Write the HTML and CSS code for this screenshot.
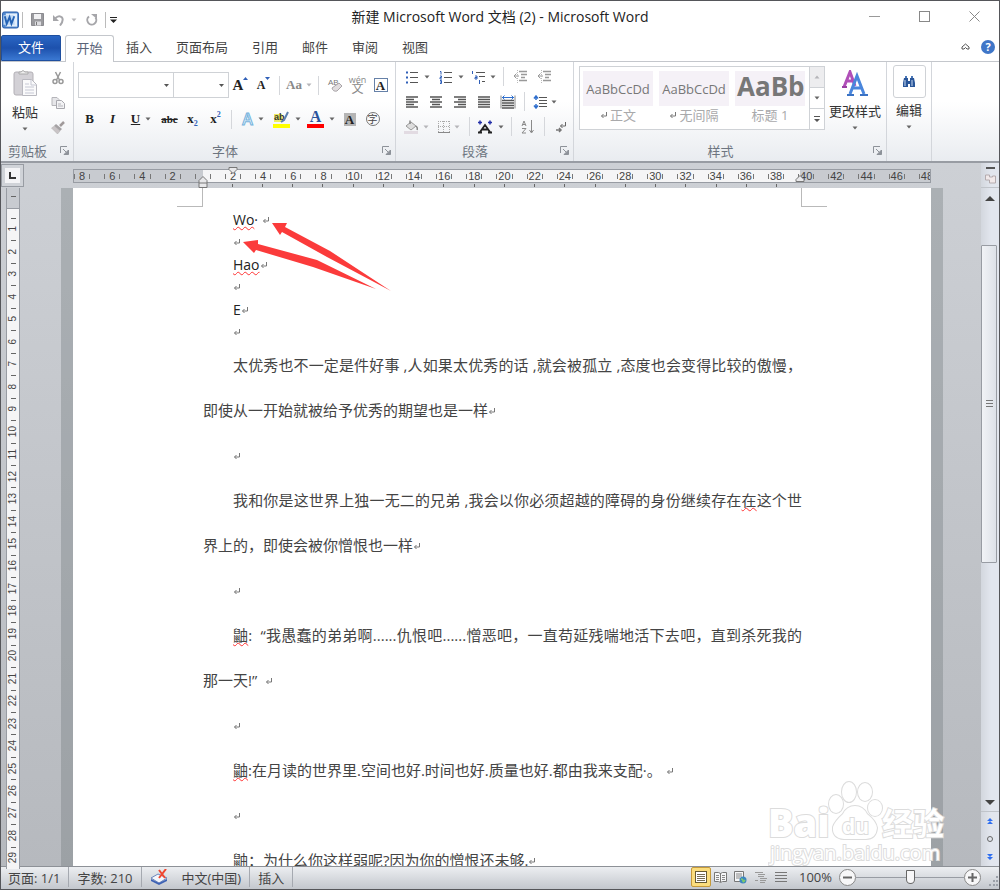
FILE: index.html
```
<!DOCTYPE html>
<html lang="zh-CN">
<head>
  <meta charset="UTF-8" />
  <title>新建 Microsoft Word 文档 (2) - Microsoft Word</title>
  <link rel="stylesheet" href="styles.css">
</head>
<body>

  <svg class="sprite" aria-hidden="true">
    <symbol id="i-mark" viewBox="0 0 8 8"><path d="M6.5 0v4H1.5M3.5 2L1.5 4l2 2" fill="none" stroke="#777" /></symbol>
    <symbol id="i-caret" viewBox="0 0 6 4"><path d="M0.5 0.5h5L3 3.5z" fill="currentColor" /></symbol>
    <symbol id="i-launch" viewBox="0 0 9 9"><path d="M0.5 7V0.5H7" fill="none" stroke="#8d9299" /><path d="M3 3l3 3M8.500 4v4.500H4z" stroke="#8d9299" fill="#8d9299" /></symbol>
    <symbol id="i-paste" viewBox="0 0 24 28">
      <rect x="1" y="3" width="19" height="23" rx="2" fill="#d3d1d6" stroke="#b3b0b6" />
      <path d="M6 5V3h2q2-3 4 0h3v2z" fill="#eee" stroke="#aaa" />
      <path d="M9.500 10.500h9l5 5v11h-14z" fill="#fafafb" stroke="#b9b9c0" />
      <path d="M18 11v5h5M12 15h4M12 18h9M12 21h9M12 24h9" fill="none" stroke="#c6c8d4" />
    </symbol>
    <symbol id="i-cut" viewBox="0 0 14 14"><path d="M4.500 1l4 8M9.500 1l-4 8" fill="none" stroke="#999" stroke-width="1.500" /><circle cx="4" cy="10.500" r="2" fill="none" stroke="#999" stroke-width="1.500" /><circle cx="10" cy="10.500" r="2" fill="none" stroke="#999" stroke-width="1.500" /></symbol>
    <symbol id="i-copy" viewBox="0 0 14 14"><path d="M1 1.500h5l2 2v6H1z" fill="#e6e6e9" stroke="#b5b5ba" /><path d="M5.500 4.500h5l3 3v5h-8z" fill="#f3f3f5" stroke="#a8a8ae" /><path d="M7 8h3M7 10h5" stroke="#b5b5bb" /></symbol>
    <symbol id="i-brush" viewBox="0 0 14 14"><path d="M13 1l-4 4" stroke="#a09a9a" stroke-width="2.500" /><path d="M5 3l6 5-2 2-6-5z" fill="#a5a2a4" /><path d="M3.500 5L0.500 7l6 6 2.500-3z" fill="#c9c4c6" stroke="#aaa" stroke-width="0.500" /></symbol>
    <symbol id="i-eraser" viewBox="0 0 16 16"><text x="1" y="8" font-size="8" font-family="Liberation Sans" fill="#777">AB</text><path d="M5 11l7-5 3 3-5 5q-4 1-5-3z" fill="#e1dddf" stroke="#a9a5a8" /></symbol>
    <symbol id="i-bullets" viewBox="0 0 14 14"><path d="M5 2.500h8M5 7.500h8M5 12.500h8" stroke="#555" /><path d="M1 1.500h2v2H1zM1 6.500h2v2H1zM1 11.500h2v2H1z" fill="#2f5fb8" /></symbol>
    <symbol id="i-numbers" viewBox="0 0 14 14"><path d="M5 2.500h8M5 7.500h8M5 12.500h8" stroke="#555" /><path d="M1 1.500h1v3M1 6h1.500v1.500H1V9h2M1 10.500h1.500v3H1M1 12h1.500" fill="none" stroke="#2f5fb8" /></symbol>
    <symbol id="i-multi" viewBox="0 0 15 14"><path d="M5 2.500h9M8 6.500h6M11 11.500h3" stroke="#555" /><path d="M1.500 1v3M4 6h2v3H4V7.500h2M8.500 10v4" fill="none" stroke="#2f5fb8" /></symbol>
    <symbol id="i-outdent" viewBox="0 0 14 14"><path d="M6 1.500h8M8 4.500h6M8 7.500h4M6 10.500h8" stroke="#999" stroke-width="1.500" /><path d="M6 6H1M3.500 3.500L1 6l2.500 2.500" fill="none" stroke="#999" /><path d="M4.500 0v14" stroke="#bbb" stroke-dasharray="1 1" /></symbol>
    <symbol id="i-left" viewBox="0 0 14 12"><path d="M1 1h12M1 3.500h8M1 6h12M1 8.500h8M1 11h12" stroke="#555" stroke-width="1.500" /></symbol>
    <symbol id="i-center" viewBox="0 0 14 12"><path d="M1 1h12M3 3.500h8M1 6h12M3 8.500h8M1 11h12" stroke="#555" stroke-width="1.500" /></symbol>
    <symbol id="i-right" viewBox="0 0 14 12"><path d="M1 1h12M5 3.500h8M1 6h12M5 8.500h8M1 11h12" stroke="#555" stroke-width="1.500" /></symbol>
    <symbol id="i-justify" viewBox="0 0 14 12"><path d="M1 1h12M1 3.500h12M1 6h12M1 8.500h12M1 11h12" stroke="#555" stroke-width="1.500" /></symbol>
    <symbol id="i-distribute" viewBox="0 0 16 14"><path d="M2 5.500h12M2 8h12M2 10.500h12M2 13h12" stroke="#555" stroke-width="1.500" /><path d="M1 0.500v13M15 0.500v13" stroke="#888" /><path d="M2 2.500h12M4.500 0.500l-2 2 2 2M11.500 0.500l2 2-2 2" fill="none" stroke="#2f6fce" /></symbol>
    <symbol id="i-spacing" viewBox="0 0 14 14"><path d="M6 2.500h8M6 5.500h8M6 8.500h8M6 11.500h8" stroke="#555" /><path d="M3 1v4M1 3.500L3 1l2 2.500M3 13V9M1 10.500L3 13l2-2.500" fill="none" stroke="#2f6fce" stroke-width="1.500" /></symbol>
    <symbol id="i-fill" viewBox="0 0 14 14"><path d="M2 6l5-4 5 4-5 4z" fill="#ddd" stroke="#999" /><path d="M6 4V0.500M12 6q2 2 1 4" fill="none" stroke="#888" stroke-width="1.500" /><path d="M0 11h14v3H0z" fill="#e2dbe2" /></symbol>
    <symbol id="i-border" viewBox="0 0 12 12"><path d="M0.500 0v11M11.500 0v11M0 0.500h12M5.500 0v11M0 5.500h12" fill="none" stroke="#aaa" stroke-dasharray="1 1" /><path d="M0 11.500h12" stroke="#888" /></symbol>
    <symbol id="i-asian" viewBox="0 0 16 14"><path d="M3 12l5-7 5 7M5 9.500h6M1 12.500h4M11 12.500h4" fill="none" stroke="#222" stroke-width="1.800" /><path d="M1 2.500h4M3 0.500v4M11 2.500h4M13 0.500v4" stroke="#2430a8" stroke-width="1.500" /></symbol>
    <symbol id="i-sort" viewBox="0 0 14 14"><path d="M1 6l2-5 2 5M1.500 4.500h3M1 8.500h4L1 13h4M10.500 0v12M8.500 10l2 3 2-3" fill="none" stroke="#8a8a8a" /></symbol>
    <symbol id="i-marks" viewBox="0 0 12 12"><path d="M10.500 1v4H5.500M7.500 3l-2 2 2 2" fill="none" stroke="#666" /><path d="M1 9h5M4 7l2 2-2 2" fill="none" stroke="#777" stroke-width="1.500" /></symbol>
    <symbol id="i-find" viewBox="0 0 14 14"><path d="M2 3h4v3h2V3h4l1 5v4H8V9H6v3H1V8z" fill="#2a5699" /><path d="M3 1h2v2H3zM9 1h2v2H9z" fill="#4977b8" /><path d="M3 5v6M10 5v6" stroke="#c8daf2" /></symbol>
  </svg>

  <header class="titlebar">
    <div class="quick">
      <svg class="app" viewBox="0 0 18 18"><rect x="0.500" y="0.500" width="17" height="17" rx="2" fill="#4f87cf" stroke="#2a5ca8" /><path d="M4 2h12v14H4z" fill="#e4effb" /><path d="M1.500 4h11l1 10H1.500z" fill="#bfd8f4" /><path d="M3 5l2 8 3-7 2 7 3-8" fill="none" stroke="#2563b5" stroke-width="2" /></svg>
      <i class="qsep"></i>
      <button class="q" aria-label="保存"><svg width="13" height="13" viewBox="0 0 13 13"><path d="M0.500 0.500h12v12h-12z" fill="#9a9a9e" stroke="#8b8b90" /><path d="M3 1h7v5H3z" fill="#f1f1f3" /><path d="M4 8.500h6v4H4z" fill="#dcdce0" /><path d="M5 9h1v3H5z" fill="#777" /></svg></button>
      <button class="q" aria-label="撤消"><svg width="12" height="12" viewBox="0 0 12 12"><path d="M2 4.500q4-4 7-1 2 3-2 8" fill="none" stroke="#a6a6aa" stroke-width="2" /><path d="M0 1v6h6z" fill="#a6a6aa" /></svg></button>
      <svg class="caret faint"><use href="#i-caret" /></svg>
      <button class="q redo" aria-label="恢复"><svg width="12" height="12" viewBox="0 0 12 12"><path d="M3 2.500a4.500 4.500 0 1 0 6.500 1" fill="none" stroke="#a6a6aa" stroke-width="2" /><path d="M5 0h6v5z" fill="#a6a6aa" /></svg></button>
      <i class="qsep"></i>
      <button class="q more" aria-label="自定义"><svg width="7" height="6" viewBox="0 0 7 6"><path d="M0 0h7v1H0zM0 2.500h7L3.500 6z" fill="#222" /></svg></button>
    </div>
    <h1>新建 Microsoft Word 文档 (2) - Microsoft Word</h1>
    <div class="caption">
      <button aria-label="最小化"><svg width="11" height="11"><path d="M0 5.500h11" stroke="#999" /></svg></button>
      <button aria-label="最大化"><svg width="11" height="11"><rect x="0.500" y="0.500" width="10" height="10" fill="none" stroke="#888" /></svg></button>
      <button aria-label="关闭"><svg width="11" height="11"><path d="M0.500 0.500l10 10M10.500 0.500l-10 10" stroke="#888" /></svg></button>
    </div>
  </header>

  <nav class="tabs">
    <button class="file">文件</button>
    <button class="tab active">开始</button>
    <button class="tab">插入</button>
    <button class="tab wide">页面布局</button>
    <button class="tab">引用</button>
    <button class="tab">邮件</button>
    <button class="tab">审阅</button>
    <button class="tab">视图</button>
    <div class="tab-tools">
      <button aria-label="折叠功能区"><svg width="9" height="7" viewBox="0 0 9 7"><path d="M1 4l3.500-3L8 4v2H6L4.500 4.500 3 6H1z" fill="none" stroke="#555" /></svg></button>
      <button class="help" aria-label="帮助">?</button>
    </div>
  </nav>

  <section class="ribbon">
    <div class="group clipboard">
      <div class="body">
        <button class="big"><svg width="24" height="28"><use href="#i-paste" /></svg><span>粘贴</span><svg class="caret"><use href="#i-caret" /></svg></button>
        <div class="stack">
          <button aria-label="剪切"><svg width="14" height="14"><use href="#i-cut" /></svg></button>
          <button aria-label="复制"><svg width="14" height="14"><use href="#i-copy" /></svg></button>
          <button aria-label="格式刷"><svg width="14" height="14"><use href="#i-brush" /></svg></button>
        </div>
      </div>
      <footer>剪贴板<svg class="launch"><use href="#i-launch" /></svg></footer>
    </div>

    <div class="group font">
      <div class="body">
        <div class="row">
          <select class="face" aria-label="字体"><option></option></select>
          <select class="size" aria-label="字号"><option></option></select>
          <button class="ib serif grow">A<svg width="5" height="3"><path d="M0 3h5L2.500 0z" fill="#2f5fb8" /></svg></button>
          <button class="ib serif shrink">A<svg width="5" height="3"><path d="M0 0h5L2.500 3z" fill="#2f5fb8" /></svg></button>
          <i class="sep"></i>
          <button class="drop serif dim"><span>Aa</span><svg class="caret faint"><use href="#i-caret" /></svg></button>
          <i class="sep"></i>
          <button class="ib" aria-label="清除格式"><svg width="16" height="16"><use href="#i-eraser" /></svg></button>
          <button class="ib pinyin"><small>wén</small>文</button>
          <button class="ib serif"><span class="boxed">A</span></button>
        </div>
        <div class="row">
          <button class="ib serif"><b>B</b></button>
          <button class="ib serif"><i class="it">I</i></button>
          <button class="drop serif"><span><u>U</u></span><svg class="caret"><use href="#i-caret" /></svg></button>
          <button class="ib serif strike">abc</button>
          <button class="ib serif">x<small class="sub">2</small></button>
          <button class="ib serif">x<small class="sup">2</small></button>
          <i class="sep"></i>
          <button class="drop glow"><span>A</span><svg class="caret"><use href="#i-caret" /></svg></button>
          <button class="drop" aria-label="突出显示"><svg width="17" height="17" viewBox="0 0 17 17"><path d="M1 3h8v8H1z" fill="#eded60" /><text x="1" y="9" font-size="9" font-weight="700" font-family="Liberation Sans" fill="#333">ab</text><path d="M15 1l-4 8-3 2" fill="none" stroke="#5b7fae" stroke-width="2" /><path d="M0 13h17v4H0z" fill="#ff0" /></svg><svg class="caret"><use href="#i-caret" /></svg></button>
          <button class="drop ink serif"><span>A</span><svg class="caret"><use href="#i-caret" /></svg></button>
          <button class="ib serif"><span class="shaded">A</span></button>
          <button class="ib"><span class="ring">字</span></button>
        </div>
      </div>
      <footer>字体<svg class="launch"><use href="#i-launch" /></svg></footer>
    </div>

    <div class="group para">
      <div class="body">
        <div class="row">
          <button class="drop" aria-label="项目符号"><svg width="14" height="14"><use href="#i-bullets" /></svg><svg class="caret"><use href="#i-caret" /></svg></button>
          <button class="drop" aria-label="编号"><svg width="14" height="14"><use href="#i-numbers" /></svg><svg class="caret"><use href="#i-caret" /></svg></button>
          <button class="drop narrow" aria-label="多级列表"><svg width="15" height="14"><use href="#i-multi" /></svg><svg class="caret"><use href="#i-caret" /></svg></button>
          <i class="sep"></i>
          <button class="ib" aria-label="减少缩进"><svg width="14" height="14"><use href="#i-outdent" /></svg></button>
          <button class="ib" aria-label="增加缩进"><svg width="14" height="14"><use href="#i-outdent" /></svg></button>
        </div>
        <div class="row">
          <button class="ib" aria-label="左对齐"><svg width="14" height="12"><use href="#i-left" /></svg></button>
          <button class="ib" aria-label="居中"><svg width="14" height="12"><use href="#i-center" /></svg></button>
          <button class="ib" aria-label="右对齐"><svg width="14" height="12"><use href="#i-right" /></svg></button>
          <button class="ib" aria-label="两端对齐"><svg width="14" height="12"><use href="#i-justify" /></svg></button>
          <button class="ib" aria-label="分散对齐"><svg width="16" height="14"><use href="#i-distribute" /></svg></button>
          <i class="sep"></i>
          <button class="drop narrow" aria-label="行距"><svg width="14" height="14"><use href="#i-spacing" /></svg><svg class="caret"><use href="#i-caret" /></svg></button>
        </div>
        <div class="row">
          <button class="drop" aria-label="底纹"><svg width="14" height="14"><use href="#i-fill" /></svg><svg class="caret faint"><use href="#i-caret" /></svg></button>
          <button class="drop narrow" aria-label="边框"><svg width="12" height="12"><use href="#i-border" /></svg><svg class="caret faint"><use href="#i-caret" /></svg></button>
          <i class="sep"></i>
          <button class="drop" aria-label="中文版式"><svg width="16" height="14"><use href="#i-asian" /></svg><svg class="caret"><use href="#i-caret" /></svg></button>
          <i class="sep"></i>
          <button class="ib" aria-label="排序"><svg width="14" height="14"><use href="#i-sort" /></svg></button>
          <i class="sep"></i>
          <button class="ib" aria-label="显示编辑标记"><svg width="12" height="12"><use href="#i-marks" /></svg></button>
        </div>
      </div>
      <footer>段落<svg class="launch"><use href="#i-launch" /></svg></footer>
    </div>

    <div class="group styles">
      <div class="body">
        <div class="gallery">
          <button class="style"><span>AaBbCcDd</span><em><svg class="mark"><use href="#i-mark" /></svg>正文</em></button>
          <button class="style"><span>AaBbCcDd</span><em><svg class="mark"><use href="#i-mark" /></svg>无间隔</em></button>
          <button class="style heading"><span>AaBb</span><em>标题 1</em></button>
          <div class="scroller">
            <button class="off" aria-label="上一行"><svg class="caret faint flip"><use href="#i-caret" /></svg></button>
            <button aria-label="下一行"><svg class="caret"><use href="#i-caret" /></svg></button>
            <button aria-label="其他"><svg width="6" height="6" viewBox="0 0 6 6"><path d="M0 0h6v1H0zM0 3h6L3 6z" fill="#555" /></svg></button>
          </div>
        </div>
        <button class="big change"><svg width="26" height="28" viewBox="0 0 26 28"><path d="M2 17L8 2l5 14M4 11h8" fill="none" stroke="#b04fb8" stroke-width="3" /><path d="M0 17h5" stroke="#9a3fa4" stroke-width="2" /><path d="M8 24L15 6l7 18M11 18h9" fill="none" stroke="#4a86dc" stroke-width="3" /><path d="M5 25h7M18 25h8" stroke="#3a72c4" stroke-width="2" /></svg><span>更改样式</span><svg class="caret"><use href="#i-caret" /></svg></button>
      </div>
      <footer>样式<svg class="launch"><use href="#i-launch" /></svg></footer>
    </div>

    <div class="group edit">
      <button class="big"><span class="tile"><svg width="14" height="14"><use href="#i-find" /></svg></span><span>编辑</span><svg class="caret"><use href="#i-caret" /></svg></button>
    </div>
  </section>

  <main class="work">
    <aside class="side">
      <button class="tabstop" aria-label="制表符"><svg width="7" height="7"><path d="M1 0v6h6" fill="none" stroke="#333" stroke-width="2" /></svg></button>
      <div class="vruler" id="vruler"></div>
    </aside>

    <div class="center">
      <div class="hruler">
        <div class="scale" id="scale"></div>
        <div class="stops" id="stops"></div>
        <svg class="indent first" viewBox="0 0 10 7"><path d="M1 0.500h8v2l-4 4-4-4z" fill="#e8e8ea" stroke="#777" /></svg>
        <svg class="indent hang" viewBox="0 0 10 12"><path d="M1 11.500v-7l4-4 4 4v7zM1 7h8" fill="#e8e8ea" stroke="#777" /></svg>
        <svg class="indent end" viewBox="0 0 10 7"><path d="M1 6.500v-2l4-4 4 4v2z" fill="#e8e8ea" stroke="#777" /></svg>
      </div>
      <article class="page">
        <div class="corners"><i></i><i></i></div>
        <div class="text">
          <p class="short"><span class="bad">Wo</span>· <svg class="mark"><use href="#i-mark" /></svg></p>
          <p class="short blank"><svg class="mark"><use href="#i-mark" /></svg></p>
          <p class="short"><span class="bad">Hao</span><svg class="mark"><use href="#i-mark" /></svg></p>
          <p class="short blank"><svg class="mark"><use href="#i-mark" /></svg></p>
          <p class="short">E<svg class="mark"><use href="#i-mark" /></svg></p>
          <p class="short blank"><svg class="mark"><use href="#i-mark" /></svg></p>
          <p>太优秀也不一定是件好事 ,人如果太优秀的话 ,就会被孤立 ,态度也会变得比较的傲慢，即使从一开始就被给予优秀的期望也是一样<svg class="mark"><use href="#i-mark" /></svg></p>
          <p><svg class="mark"><use href="#i-mark" /></svg></p>
          <p>我和你是这世界上独一无二的兄弟 ,我会以你必须超越的障碍的身份继续存在<span class="bad">在</span>这个世界上的，即使会被你憎恨也一样<svg class="mark"><use href="#i-mark" /></svg></p>
          <p><svg class="mark"><use href="#i-mark" /></svg></p>
          <p><span class="bad">鼬</span>:&nbsp; “我愚蠢的弟弟啊......仇恨吧......憎恶吧，一直苟延残喘地活下去吧，直到杀死我的那一天!”&nbsp; <svg class="mark"><use href="#i-mark" /></svg></p>
          <p><svg class="mark"><use href="#i-mark" /></svg></p>
          <p><span class="bad">鼬</span>:在月读的世界里.空间也好.时间也好.质量也好.都由我来支配·。 <svg class="mark"><use href="#i-mark" /></svg></p>
          <p><svg class="mark"><use href="#i-mark" /></svg></p>
          <p><span class="bad">鼬</span>：为什么你这样弱呢?因为你的憎恨还未够.<svg class="mark"><use href="#i-mark" /></svg></p>
        </div>
        <svg class="arrows" viewBox="0 0 160 80">
          <path d="M32 11h15l-2 4 45 24 61 40-64-34-45-25-2 3z" fill="#fb3b3b" />
          <path d="M3 30l15-2v4l59 16 59 29-63-22-57-17-2 3z" fill="#fb3b3b" />
        </svg>
      </article>
    </div>

    <aside class="vscroll">
      <button class="objects" aria-label="标尺"><svg width="11" height="18" viewBox="0 0 11 18"><path d="M1 2h9" stroke="#555" stroke-width="2" /><path d="M0.500 9h4v2h3v-1h3v7h-6v-3h-4z" fill="#f1e9ea" stroke="#b4abae" /></svg></button>
      <button class="up" aria-label="向上"><svg width="10" height="5"><path d="M0 5h10L5 0z" fill="#444" /></svg></button>
      <div class="track"><div class="thumb"><i></i></div></div>
      <button class="down" aria-label="向下"><svg width="10" height="5"><path d="M0 0h10L5 5z" fill="#444" /></svg></button>
      <div class="browse">
        <button aria-label="前一页"><svg width="6" height="8"><path d="M0 4l3-3 3 3zM0 7l3-3 3 3z" fill="#2f6ff0" /></svg></button>
        <button aria-label="选择浏览对象"><svg width="8" height="8"><circle cx="4" cy="4" r="2.500" fill="none" stroke="#666" /></svg></button>
        <button aria-label="下一页"><svg width="6" height="8"><path d="M0 1l3 3 3-3zM0 4l3 3 3-3z" fill="#2f6ff0" /></svg></button>
      </div>
    </aside>

    <svg class="watermark" viewBox="0 0 180 86" aria-label="Baidu 经验">
      <g class="wm">
        <text x="0" y="57" font-size="38" font-weight="800">Bai</text>
        <ellipse cx="68" cy="24" rx="7" ry="9" />
        <ellipse cx="81" cy="12" rx="7" ry="10" />
        <ellipse cx="97" cy="12" rx="7" ry="9" />
        <ellipse cx="107" cy="28" rx="7" ry="8" />
        <path d="M87 26q8 0 12 8 9 7 10 14-1 11-11 11H76q-12-1-11-12 2-6 10-13 4-8 12-8z" />
        <text x="74" y="54" font-size="21" font-weight="700">du</text>
        <text x="114" y="55" font-size="31" font-weight="700">经验</text>
        <text x="2" y="80" font-size="20">jingyan.baidu.com</text>
      </g>
    </svg>
  </main>

  <footer class="status">
    <span class="cell">页面: 1/1</span>
    <span class="cell">字数: 210</span>
    <span class="cell lang"><svg width="18" height="16" viewBox="0 0 18 16"><path d="M1 9l7-4 9 4-8 5z" fill="#f4f6fb" stroke="#6c86bd" /><path d="M1 10l8 4 8-4v2l-8 4-8-4z" fill="#3d62b5" /><path d="M9 1l6 8M16 0l-7 9" stroke="#f0462f" stroke-width="2" /></svg>中文(中国)</span>
    <span class="cell">插入</span>
    <div class="views">
      <button class="on" aria-label="页面视图"><svg width="12" height="12"><rect x="0.500" y="0.500" width="11" height="11" fill="#fff" stroke="#665a33" /><path d="M2 3.500h8M2 5.500h8M2 7.500h8M2 9.500h8" stroke="#776e55" /></svg></button>
      <button aria-label="阅读版式"><svg width="13" height="12"><path d="M0.500 1.500h4l2 1 2-1h4v9h-4l-2 1-2-1h-4zM6.500 2v9" fill="#f5f6f8" stroke="#777" /><path d="M2 4.500h3M2 6.500h3M2 8.500h3M8 4.500h3M8 6.500h3M8 8.500h3" stroke="#888" /></svg></button>
      <button aria-label="Web 版式"><svg width="13" height="13"><path d="M0.500 0.500h9v10h-9z" fill="#f5f6f8" stroke="#777" /><path d="M2 3h6M2 5h6M2 7h4" stroke="#888" /><circle cx="9" cy="9" r="3.500" fill="#3c86c0" /><path d="M7 8q2 0 2 2t2-1" stroke="#7ecb6b" fill="none" stroke-width="1.500" /></svg></button>
      <button aria-label="大纲"><svg width="12" height="12"><path d="M0 1.500h8M3 3.500h7M3 5.500h6M5 7.500h7M0 9.500h3M5 9.500h6M5 11.500h5" stroke="#999" /></svg></button>
      <button aria-label="草稿"><svg width="12" height="12"><path d="M0 1.500h12M0 4.500h12M0 7.500h12M0 10.500h12" stroke="#777" /></svg></button>
    </div>
    <label class="pct" for="zoom">100%</label>
    <button class="round" aria-label="缩小"><svg width="9" height="9"><path d="M0 4.500h9" stroke="#666" stroke-width="2" /></svg></button>
    <input type="range" id="zoom" min="0" max="200" value="100">
    <button class="round" aria-label="放大"><svg width="9" height="9"><path d="M0 4.500h9M4.500 0v9" stroke="#666" stroke-width="2" /></svg></button>
    <svg class="grip" width="12" height="12"><path d="M9 1h2v2H9zM6 5h2v2H6zM9 5h2v2H9zM2 9h2v2H2zM6 9h2v2H6zM9 9h2v2H9z" fill="#9ba0a8" /></svg>
  </footer>

  <script>
    const scale = document.getElementById("scale");
    const stops = document.getElementById("stops");
    const vruler = document.getElementById("vruler");

    // horizontal ruler, in characters, from 8 left of the margin
    for (let n = -8; n <= 48; n += 2) {
      const cell = document.createElement("span");
      if (n !== 0) cell.textContent = Math.abs(n);
      scale.appendChild(cell);

      const stop = document.createElement("span");
      if (n > 0 && n < 40) stop.className = "stop";
      stops.appendChild(stop);
    }

    // vertical ruler, in lines
    for (let n = 1; n <= 29; n++) {
      const cell = document.createElement("span");
      cell.innerHTML = `<b>${n}</b>`;
      vruler.appendChild(cell);
    }
  </script>

</body>
</html>
```
FILE: styles.css
```
* { box-sizing: border-box; }
body {
  margin: 0;
  height: 100vh;
  display: flex;
  flex-direction: column;
  overflow: hidden;
  border: 1px solid #55565a;
  background: #fff;
  font-family: "Open Sans", "Noto Sans CJK SC", sans-serif;
  font-size: 13px;
  color: #444;
}
button, select {
  font: inherit;
  color: inherit;
  background: none;
  border: none;
  padding: 0;
  margin: 0;
}
button {
  display: flex;
  align-items: center;
  justify-content: center;
}
svg { display: block; flex: none; }
.sprite { width: 0; height: 0; position: absolute; }
.caret { width: 6px; height: 4px; color: #666; }
.faint { color: #b5b5b9; }
.flip { transform: rotate(180deg); }
.mark { width: 8px; height: 8px; }

/* title bar */
.titlebar {
  flex: none;
  height: 34px;
  display: grid;
  grid-template-columns: 1fr auto 1fr;
}
.titlebar h1 {
  margin: 0;
  font-size: 14px;
  font-weight: 400;
  line-height: 32px;
  color: #222;
}
.quick { display: flex; align-items: center; padding: 3px 0 0 1px; }
.app { width: 17px; height: 18px; }
.qsep { width: 1px; height: 16px; background: #bbb; margin: 0 4px 0 3px; }
.q { width: 21px; height: 20px; }
.quick .caret { margin: 0 5px 0 2px; }
.redo { width: 20px; }
.quick .more { width: 7px; }
.caption { display: flex; justify-content: flex-end; align-items: center; height: 31px; }
.caption button { width: 50px; height: 31px; }

/* tabs */
.tabs {
  flex: none;
  display: flex;
  height: 27px;
  border-bottom: 1px solid #c4c7cc;
}
.file {
  width: 60px;
  height: 26px;
  background: linear-gradient(#2a66c4, #1d51ad 50%, #3a78d2);
  border: 1px solid #1e4f9f;
  border-radius: 2px 2px 0 0;
  color: #fff;
  margin-right: 4px;
}
.file, .tab { padding-bottom: 3px; }
.tab { width: 50px; height: 26px; }
.tab.wide { width: 76px; }
.tab.active {
  width: 49px;
  height: 27px;
  border: 1px solid #c4c7cc;
  border-bottom: none;
  border-radius: 3px 3px 0 0;
  background: #fff;
  color: #5b6478;
}
.tab-tools { display: flex; gap: 11px; align-items: center; margin-left: auto; padding: 0 4px 3px 0; }
.help {
  width: 14px;
  height: 14px;
  border-radius: 50%;
  background: #3f76c8;
  color: #fff;
  font-size: 11px;
  font-weight: 700;
}

/* ribbon */
.ribbon {
  flex: none;
  display: flex;
  height: 101px;
  background: linear-gradient(#fff 40%, #e9ecf0);
  border-bottom: 2px solid #989ca3;
}
.group {
  flex: none;
  display: flex;
  flex-direction: column;
  border-right: 1px solid #d3d6db;
}
.group .body { flex: 1; }
.group footer {
  display: flex;
  justify-content: center;
  align-items: center;
  height: 18px;
  margin-bottom: 2px;
  color: #6d7580;
}
.launch { width: 9px; height: 9px; }
.font .launch, .para .launch, .styles .launch { margin-left: auto; margin-right: 4px; }
.font footer::before, .para footer::before, .styles footer::before { content: ""; margin: 0 auto 0 -6px; }
.clipboard { width: 73px; }
.clipboard .body { display: flex; }
.clipboard footer { padding: 0 4px 0 7px; justify-content: space-between; }
.big { flex-direction: column; justify-content: flex-start; }
.clipboard .big { width: 48px; padding-top: 7px; }
.big span { line-height: 20px; color: #333; }
.clipboard .big span { margin-top: 5px; }
.big .caret { margin-top: 5px; }
.stack { display: flex; flex-direction: column; padding-top: 3px; }
.stack button { width: 18px; height: 25px; }
.row { display: flex; align-items: center; }
.sep { width: 1px; height: 19px; background: #d5d7db; margin: 0 4px; }
.ib { width: 23px; height: 24px; }
.drop { width: 34px; height: 24px; gap: 5px; }
.serif { font-family: "Liberation Serif", serif; font-weight: 700; color: #222; }

.font { width: 322px; }
.font .body { padding: 10px 0 0 4px; }
.font .row { height: 26px; }
.font .row + .row { margin-top: 8px; }
select {
  appearance: none;
  height: 26px;
  border: 1px solid #cfd2d6;
  background: #fff url("data:image/svg+xml,%3Csvg xmlns='http://www.w3.org/2000/svg' width='5' height='3'%3E%3Cpath d='M0 0h5L2.500 3z' fill='%23555'/%3E%3C/svg%3E") no-repeat right 4px center;
}
.face { width: 96px; }
.size { width: 56px; margin-left: -1px; }
.grow { font-size: 15px; }
.shrink { font-size: 12px; }
.grow svg, .shrink svg { align-self: flex-start; margin-top: 4px; }
.font .dim { width: 30px; color: #888; gap: 4px; }
.pinyin { flex-direction: column; line-height: 11px; font-size: 12px; color: #888; }
.pinyin small { font-size: 9px; line-height: 7px; }
.boxed {
  width: 14px;
  height: 14px;
  border: 1px solid #6681a8;
  line-height: 13px;
}
.it { font-style: italic; }
.strike { text-decoration: line-through; font-size: 11px; }
.sub, .sup { font-size: 8px; color: #2f5fb8; }
.sub { align-self: flex-end; margin-bottom: 3px; }
.sup { align-self: flex-start; margin-top: 3px; }
.glow span {
  font-size: 16px;
  font-weight: 600;
  color: #eef7fd;
  -webkit-text-stroke: 1px #74b2dc;
}
.ink span {
  width: 17px;
  font-size: 16px;
  line-height: 12px;
  padding-bottom: 1px;
  border-bottom: 4px solid #f00;
  color: #2b549c;
}
.shaded { width: 12px; line-height: 13px; background: #b5b5b5; }
.ring {
  width: 14px;
  height: 14px;
  border: 1px solid #777;
  border-radius: 50%;
  font-size: 10px;
  line-height: 12px;
}

.para { width: 178px; }
.para .body { padding: 2px 0 0 4px; }
.para .row { height: 25px; }
.para .ib { width: 24px; }
.para .narrow { width: 31px; gap: 4px; }

.styles { width: 313px; }
.styles .body { display: flex; padding: 4px 0 0 5px; }
.gallery {
  display: flex;
  width: 246px;
  height: 64px;
  border: 1px solid #cfd2d6;
  background: #fff;
}
.style {
  width: 70px;
  flex-direction: column;
  margin: 4px 3px 0;
  justify-content: flex-start;
  color: #777;
}
.style span {
  width: 70px;
  height: 35px;
  line-height: 37px;
  background: #f5f1f7;
  overflow: hidden;
}
.style em {
  display: flex;
  align-items: center;
  gap: 2px;
  font-style: normal;
  line-height: 19px;
  color: #a9a9ab;
}
.style.heading span {
  padding-left: 2px;
  text-align: left;
  font-size: 26px;
  font-weight: 700;
  line-height: 31px;
}
.scroller { width: 15px; margin-left: auto; display: flex; flex-direction: column; border-left: 1px solid #cfd2d6; }
.scroller button { flex: 1; }
.scroller button + button { border-top: 1px solid #cfd2d6; }
.scroller .off { background: #ededef; }
.change { width: 60px; padding-top: 4px; }
.change span { margin-top: 3px; }

.edit { width: 45px; align-items: center; padding-top: 3px; }
.tile {
  width: 33px;
  height: 33px;
  display: flex;
  align-items: center;
  justify-content: center;
  border: 1px solid #cfd2d6;
  border-radius: 3px;
  background: #fff;
}
.edit .big span + span { margin-top: 2px; }

/* work area */
.work {
  position: relative;
  flex: 1;
  min-height: 0;
  display: flex;
  background: linear-gradient(#cdd0d5, #b6b9be);
}
.side { width: 24px; display: flex; flex-direction: column; }
.tabstop {
  flex: none;
  width: 23px;
  height: 23px;
  margin: 1px 0;
  border: 1px solid #989ca3;
  background: #f4f4f6;
  box-shadow: inset 0 0 0 3px #d0d3d8;
}
.vruler {
  flex: 1;
  min-height: 0;
  width: 14px;
  margin-left: 5px;
  display: flex;
  flex-direction: column;
  padding-top: 30px;
  margin-bottom: -3px;
  border: solid #989ca3;
  border-width: 0 1px;
  background:
    linear-gradient(#666, #666) 50% 8px / 5px 1px no-repeat,
    linear-gradient(#c8cbd0 20px, #989ca3 20px, #989ca3 21px, #f5f5f6 21px);
}
.vruler span {
  flex: 1;
  display: flex;
  align-items: center;
  justify-content: center;
  background: linear-gradient(#666, #666) center top / 5px 1px no-repeat;
}
.vruler b {
  writing-mode: vertical-rl;
  transform: rotate(180deg);
  font: 10px/12px "Liberation Sans", sans-serif;
}
.center {
  flex: 1;
  min-width: 0;
  display: flex;
  flex-direction: column;
  align-items: center;
  overflow: hidden;
}
.hruler {
  position: relative;
  flex: none;
  width: 100%;
  max-width: 858px;
  height: 25px;
  padding-top: 6px;
}
.scale {
  display: flex;
  height: 14px;
  overflow: hidden;
  border: 1px solid #989ca3;
  background: linear-gradient(90deg, #c8cbd0 129px, #f5f5f6 129px calc(100% - 130px), #c8cbd0 calc(100% - 130px));
}
.scale span, .stops span {
  flex: 1 0 0;
  display: flex;
  align-items: center;
  justify-content: space-between;
  padding: 0 7px;
  font: 11px/12px "Liberation Sans", sans-serif;
}
.scale span:first-child, .stops span:first-child { margin-left: -7px; }
.scale span:last-child, .stops span:last-child { margin-right: -12px; }
.scale span::before, .scale span::after { content: ""; width: 1px; height: 5px; background: #777; }
.stops { display: flex; overflow: hidden; height: 3px; margin-top: 1px; }
.stop { background: linear-gradient(#666, #666) center / 1px 3px no-repeat; }
.indent { position: absolute; width: 10px; }
.first { left: 155px; top: 4px; height: 7px; }
.hang { left: 125px; top: 13px; height: 12px; }
.end { right: 126px; top: 12px; height: 7px; }
.page {
  position: relative;
  flex: 1;
  width: 100%;
  max-width: 858px;
  background: #fff;
  box-shadow: 12px 0 rgba(110, 118, 120, 0.35), -12px 0 rgba(110, 118, 120, 0.35);
}
.corners { display: flex; justify-content: space-between; height: 19px; padding: 0 104px; }
.corners i { width: 26px; border: solid #b9b9b9; border-width: 0 1px 1px 0; }
.corners i + i { border-width: 0 0 1px 1px; }
.text {
  padding: 1px 129px 0 130px;
  font-size: 15px;
  line-height: 45px;
}
.text p { margin: 0; text-indent: 30px; text-align: justify; }
.text .short { font-size: 14px; line-height: 23px; color: #222; }
.text .blank { line-height: 22px; }
.text .mark { display: inline-block; }
.bad { text-decoration: underline wavy #f33 1px; }
.arrows { position: absolute; left: 167px; top: 24px; width: 160px; height: 80px; }

/* scrollbar */
.vscroll {
  width: 20px;
  padding-left: 2px;
  display: flex;
  flex-direction: column;
  background: linear-gradient(90deg, transparent 2px, #d3d7de 2px, #e2e6ee 12px);
}
.vscroll button { flex: none; width: 18px; }
.objects { height: 25px; border-bottom: 1px solid #c0c4ca; }
.up { height: 20px; }
.track { flex: 1; padding-top: 37px; }
.thumb {
  height: 58%;
  margin-right: 2px;
  display: flex;
  align-items: center;
  justify-content: center;
  border: 1px solid #989ca3;
  border-radius: 1px;
  background: linear-gradient(90deg, #f1f3f6, #dde1e8);
}
.thumb i { width: 7px; height: 7px; background: repeating-linear-gradient(#777 0 1px, transparent 1px 3px); }
.down { height: 18px; }
.browse { display: flex; flex-direction: column; border-top: 1px solid #c0c4ca; }
.browse button { height: 18px; }

.watermark { position: absolute; right: 51px; bottom: 0; width: 180px; height: 86px; }
.wm {
  fill: #fff;
  stroke: #dcdcdc;
  stroke-width: 2px;
  paint-order: stroke;
  font-family: "Open Sans", "Noto Sans CJK SC", sans-serif;
}

/* status bar */
.status {
  flex: none;
  display: flex;
  align-items: center;
  height: 23px;
  padding-bottom: 2px;
  border-top: 1px solid #8d9197;
  background: linear-gradient(#eceef1, #c3c7cd);
}
.cell {
  display: flex;
  align-items: center;
  gap: 14px;
  height: 20px;
  padding: 0 8px;
  border-right: 1px solid #a5a9b0;
}
.cell:first-child { padding-left: 7px; }
.views { display: flex; margin-left: auto; }
.views button { width: 20px; height: 20px; }
.views .on { background: #fbdd7e; border: 1px solid #c69a3a; border-radius: 2px; }
.pct { margin: 0 7px 0 8px; }
.round {
  width: 17px;
  height: 17px;
  border: 1px solid #888;
  border-radius: 50%;
  background: #f7f7f8;
}
#zoom {
  appearance: none;
  width: 108px;
  height: 16px;
  margin: 0;
  background: linear-gradient(#989ca3, #989ca3) center / 100% 1px no-repeat;
}
#zoom::-webkit-slider-thumb {
  appearance: none;
  width: 9px;
  height: 14px;
  border: 1px solid #666;
  border-radius: 1px 1px 5px 5px;
  background: #f7f7f8;
}
.grip { align-self: flex-end; margin-left: 6px; }
```
